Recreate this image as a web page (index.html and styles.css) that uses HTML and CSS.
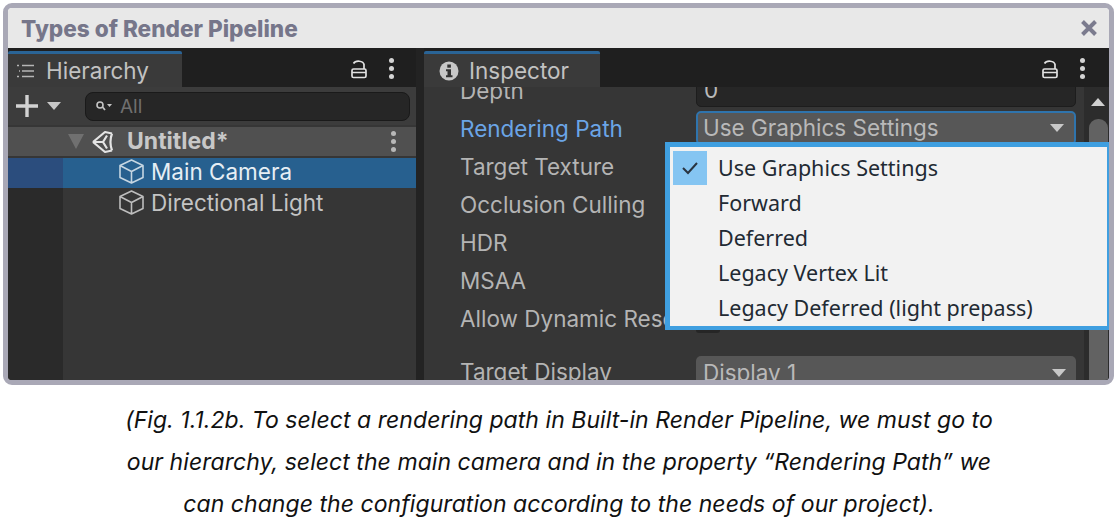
FILE: index.html
```html
<!DOCTYPE html>
<html lang="en">
<head>
	<meta charset="UTF-8">
	<title>Types of Render Pipeline</title>
	<link rel="stylesheet" href="styles.css">
</head>
<body>
	<div class="frame">
		<div class="titlebar">
			<h1 class="title">Types of Render Pipeline</h1>
			<svg class="close" width="18" height="18" viewBox="0 0 18 18"><path d="M2.5 2.5L15.5 15.5M15.5 2.5L2.5 15.5" stroke="#7b7b8e" stroke-width="4" fill="none"/></svg>
		</div>
		<div class="editor">
			<!-- hierarchy -->
			<div class="panel hierarchy">
				<div class="tabbar">
					<div class="tab tab-hierarchy">
						<svg width="20" height="16" viewBox="0 0 20 16"><path d="M1 2.500h2M6 2.500h12M3 8h1M6 8h12M1 13.500h2M6 13.500h12" stroke="#b5b5b5" stroke-width="1.400" fill="none"/></svg>
						<span>Hierarchy</span>
					</div>
					<div class="tools">
						<svg width="16" height="20" viewBox="0 0 16 20"><path d="M2.500 4.500a5.500 3.800 0 0 1 10.500 1V10" stroke="#e2e2e2" stroke-width="1.700" fill="none"/><rect x="1" y="10" width="14" height="8.500" rx="1.500" stroke="#e2e2e2" stroke-width="1.700" fill="none"/><path d="M1 13.500h14" stroke="#e2e2e2" stroke-width="1.500"/></svg>
						<div class="dots"><i></i><i></i><i></i></div>
					</div>
				</div>
				<div class="toolbar">
					<svg class="plus" width="24" height="24" viewBox="0 0 24 24"><path d="M12 1v22M1 12h22" stroke="#d2d2d2" stroke-width="3.400" fill="none"/></svg>
					<span class="arrow arrow-plus"></span>
					<div class="search">
						<svg width="18" height="12" viewBox="0 0 18 12"><circle cx="5" cy="5" r="3" stroke="#c4c4c4" stroke-width="1.600" fill="none"/><path d="M7.500 7L10 10" stroke="#c4c4c4" stroke-width="1.800"/><path d="M12 4h5l-2.500 3z" fill="#c4c4c4"/></svg>
						<span>All</span>
					</div>
				</div>
				<div class="scene-row">
					<span class="arrow arrow-scene"></span>
					<svg width="24" height="26" viewBox="0 0 24 26"><path d="M2 13L14 3l7 1.500M2 13l12 10 7-1.500M21 4.500c-2 5.500-2 11.500 0 17M2 13h10l4-6.500M12 13l4 6.500" stroke="#e4e4e4" stroke-width="2.200" fill="none" stroke-linejoin="round"/></svg>
					<span class="scene-name">Untitled*</span>
					<div class="dots dots-scene"><i></i><i></i><i></i></div>
				</div>
				<div class="tree">
					<div class="tree-row selected">
						<svg width="27" height="27" viewBox="0 0 27 27"><path d="M13.500 2L25 7.500v12L13.500 25 2 19.500v-12zM2 7.500l11.500 6 11.500-6M13.500 13.500V25" stroke="#c6d6e2" stroke-width="1.600" fill="none" stroke-linejoin="round"/></svg>
						<span>Main Camera</span>
					</div>
					<div class="tree-row">
						<svg width="27" height="27" viewBox="0 0 27 27"><path d="M13.500 2L25 7.500v12L13.500 25 2 19.500v-12zM2 7.500l11.500 6 11.500-6M13.500 13.500V25" stroke="#bdbdbd" stroke-width="1.600" fill="none" stroke-linejoin="round"/></svg>
						<span>Directional Light</span>
					</div>
				</div>
			</div>

			<!-- inspector -->
			<div class="panel inspector">
				<div class="tabbar">
					<div class="tab tab-inspector">
						<svg width="20" height="20" viewBox="0 0 20 20"><circle cx="10" cy="10" r="9.500" fill="#c8c8c8"/><rect x="8.300" y="3.500" width="3.600" height="3.200" fill="#333"/><path d="M7 8.300h5v6h1.500v2h-6.500v-2h1.500v-4h-1.500z" fill="#333"/></svg>
						<span>Inspector</span>
					</div>
					<div class="tools tools-inspector">
						<svg width="16" height="20" viewBox="0 0 16 20"><path d="M2.500 4.500a5.500 3.800 0 0 1 10.500 1V10" stroke="#e2e2e2" stroke-width="1.700" fill="none"/><rect x="1" y="10" width="14" height="8.500" rx="1.500" stroke="#e2e2e2" stroke-width="1.700" fill="none"/><path d="M1 13.500h14" stroke="#e2e2e2" stroke-width="1.500"/></svg>
						<div class="dots"><i></i><i></i><i></i></div>
					</div>
				</div>
				<div class="inspector-body">
					<div class="props">
						<div class="prop prop-depth">
							<span class="label">Depth</span>
							<div class="field input">0</div>
						</div>
						<div class="prop">
							<span class="label label-on">Rendering Path</span>
							<div class="field select select-on">Use Graphics Settings<span class="arrow"></span></div>
						</div>
						<div class="prop"><span class="label">Target Texture</span></div>
						<div class="prop"><span class="label">Occlusion Culling</span></div>
						<div class="prop"><span class="label">HDR</span></div>
						<div class="prop"><span class="label">MSAA</span></div>
						<div class="prop">
							<span class="label">Allow Dynamic Resolution</span>
							<div class="toggle"></div>
						</div>
						<div class="prop prop-display">
							<span class="label">Target Display</span>
							<div class="field select">Display 1<span class="arrow"></span></div>
						</div>
					</div>
					<div class="scrollbar">
						<svg class="scroll-up" width="14" height="8" viewBox="0 0 14 8"><path d="M7 0l7 8H0z" fill="#d0d0d0"/></svg>
						<div class="thumb"></div>
					</div>
				</div>
				<ul class="menu">
					<li class="menu-item"><span class="check"><svg width="18" height="14" viewBox="0 0 18 14"><path d="M2 7l5 5L16 2" stroke="#2a3440" stroke-width="2" fill="none"/></svg></span>Use Graphics Settings</li>
					<li class="menu-item"><span class="check-empty"></span>Forward</li>
					<li class="menu-item"><span class="check-empty"></span>Deferred</li>
					<li class="menu-item"><span class="check-empty"></span>Legacy Vertex Lit</li>
					<li class="menu-item"><span class="check-empty"></span>Legacy Deferred (light prepass)</li>
				</ul>
			</div>
		</div>
	</div>
	<p class="caption">(Fig. 1.1.2b. To select a rendering path in Built-in Render Pipeline, we must go to<br>our hierarchy, select the main camera and in the property “Rendering Path” we<br>can change the configuration according to the needs of our project).</p>
</body>
</html>
```

FILE: styles.css
```css
*{
	margin: 0;
	padding: 0;
	box-sizing: border-box;
}
ul{
	list-style: none;
}
body{
	background: #fff;
	padding: 3px 4px 0 3px;
	font-family: "Inter", "Liberation Sans", sans-serif;
	overflow: hidden;
}
.frame{
	height: 382px;
	border: 5px solid #a9a8b6;
	border-radius: 9px;
	overflow: hidden;
	display: flex;
	flex-direction: column;
}
.titlebar{
	height: 40px;
	flex: none;
	background: #e8e8e8;
	display: flex;
	align-items: center;
	justify-content: space-between;
	padding: 0 11px 0 13px;
}
.title{
	font-size: 22.600px;
	font-weight: 800;
	color: #76768a;
}
.editor{
	flex: 1;
	min-height: 0;
	display: flex;
	gap: 8px;
	background: #232323;
}
.panel{
	display: flex;
	flex-direction: column;
	background: #363636;
	color: #c4c4c4;
}
.hierarchy{
	width: 408px;
}
.inspector{
	flex: 1;
	position: relative;
	min-width: 0;
}
.tabbar{
	height: 39px;
	flex: none;
	background: #1f1f1f;
	display: flex;
	justify-content: space-between;
	position: relative;
	z-index: 1;
}
.tab{
	background: #3a3a3a;
	border-top: 3px solid #2a6496;
	border-top-left-radius: 2px;
	border-top-right-radius: 2px;
	margin-top: 3px;
	display: flex;
	align-items: center;
	font-size: 22.500px;
	color: #c2c2c2;
}
.tab-hierarchy{
	width: 174px;
	padding-left: 8px;
	gap: 10px;
}
.tab-inspector{
	width: 176px;
	padding-left: 15px;
	gap: 10px;
}
.tools{
	display: flex;
	align-items: center;
	gap: 22px;
	padding: 2px 22px 0 0;
}
.tools-inspector{
	padding-right: 24px;
}
.dots{
	display: flex;
	flex-direction: column;
	gap: 3px;
}
.dots i{
	width: 5px;
	height: 5px;
	border-radius: 50%;
	background: #d4d4d4;
}
.dots-scene{
	margin-left: auto;
	margin-right: 20px;
}
.dots-scene i{
	background: #b8b8b8;
}
.arrow{
	width: 0;
	height: 0;
	border-left: 7px solid transparent;
	border-right: 7px solid transparent;
	border-top: 8px solid #c8c8c8;
}
.toolbar{
	height: 38px;
	flex: none;
	background: #3c3c3c;
	display: flex;
	align-items: center;
	padding-left: 7px;
}
.arrow-plus{
	margin-left: 8px;
}
.search{
	width: 325px;
	height: 29px;
	margin-left: 24px;
	background: #262626;
	border: 1px solid #1a1a1a;
	border-radius: 8px;
	display: flex;
	align-items: center;
	gap: 7px;
	padding-left: 9px;
	font-size: 19px;
	color: #6f6f6f;
}
.scene-row{
	height: 29px;
	margin: 2px 0;
	flex: none;
	background: #505050;
	display: flex;
	align-items: center;
	padding-left: 60px;
	font-size: 23px;
	font-weight: 700;
	color: #c8c8c8;
}
.arrow-scene{
	border-left-width: 8px;
	border-right-width: 8px;
	border-top: 15px solid #707070;
	margin-right: 7px;
}
.scene-name{
	margin: 0 0 1px 12px;
}
.tree{
	flex: 1;
	background: linear-gradient(to right, #2a2a2a 55px, #363636 55px);
}
.tree-row{
	height: 31px;
	display: flex;
	align-items: center;
	gap: 6px;
	padding: 0 0 3px 110px;
	font-size: 22.500px;
	color: #c4c4c4;
}
.selected{
	height: 30px;
	background: linear-gradient(to right, #2b4d7d 55px, #27608f 55px);
	color: #e6eef4;
}
.inspector-body{
	flex: 1;
	min-height: 0;
	display: flex;
	overflow: hidden;
}
.props{
	flex: 1;
	min-width: 0;
	padding: 0 8px 0 36px;
}
.prop{
	height: 38px;
	display: flex;
	font-size: 22.500px;
	line-height: 36px;
	position: relative;
}
.prop-depth{
	margin-top: -14px;
}
.prop-display{
	margin-top: 15px;
}
.label{
	width: 236px;
	flex: none;
	white-space: nowrap;
	color: #b4b4b4;
}
.label-on{
	color: #6ba5e6;
}
.field{
	flex: 1;
	height: 34px;
	border-radius: 5px;
	padding-left: 7px;
	line-height: 32px;
	display: flex;
	align-items: center;
	justify-content: space-between;
	color: #b9b9b9;
}
.input{
	background: #262626;
	border: 1px solid #1d1d1d;
}
.select{
	background: #575757;
	padding-right: 10px;
}
.select-on{
	border: 2px solid #2f74ad;
	padding-left: 5px;
}
.prop-display .select{
	margin-top: 2px;
}
.toggle{
	width: 24px;
	height: 32px;
	background: #262626;
	border-radius: 3px;
}
.scrollbar{
	width: 25px;
	flex: none;
	background: #2c2c2c;
	display: flex;
	flex-direction: column;
	align-items: center;
	padding-left: 3px;
}
.scroll-up{
	flex: none;
	margin-top: 11px;
}
.thumb{
	width: 19px;
	flex: 1;
	margin-top: 13px;
	background: #626262;
	border-radius: 9px 9px 0 0;
}
.menu{
	position: absolute;
	left: 241px;
	top: 94px;
	width: 444px;
	height: 188px;
	border-style: solid;
	border-color: #3f9fe0;
	border-width: 5px 2px 4px 5px;
	background: #f2f2f2;
	padding-top: 3px;
	z-index: 2;
	font-family: "Noto Sans", "Open Sans", sans-serif;
	font-size: 21.500px;
	color: #222a33;
}
.menu-item{
	height: 35px;
	display: flex;
	align-items: center;
	padding-left: 3px;
}
.check,
.check-empty{
	width: 34px;
	height: 34px;
	flex: none;
	margin-right: 11px;
	display: flex;
	align-items: center;
	justify-content: center;
}
.check{
	background: #85c5f2;
}
.caption{
	padding-top: 14px;
	margin-right: -1px;
	text-align: center;
	font-size: 23px;
	letter-spacing: .05px;
	line-height: 42px;
	font-style: italic;
	color: #111;
	white-space: nowrap;
}
```
